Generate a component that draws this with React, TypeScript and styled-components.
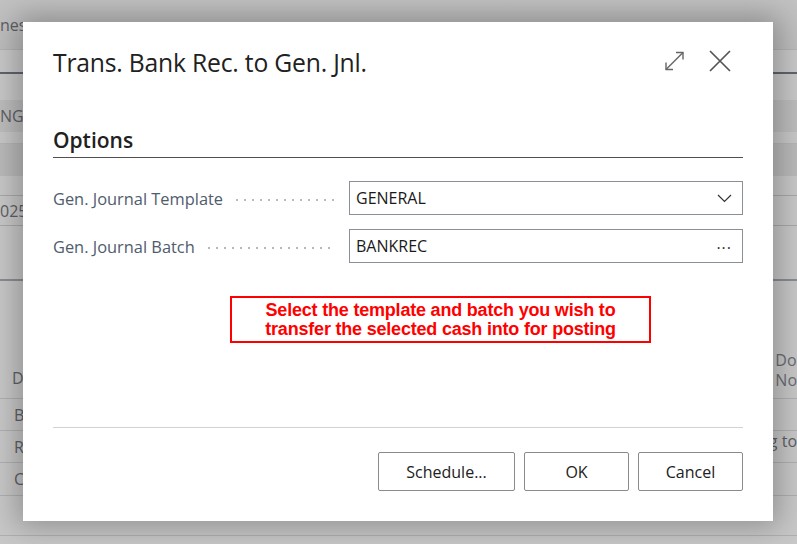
import styled, { createGlobalStyle } from "styled-components";

const GlobalStyle = createGlobalStyle`
  html, body {
    margin: 0;
    padding: 0;
    width: 797px;
    height: 544px;
    overflow: hidden;
    font-family: "Open Sans", "Noto Sans", sans-serif;
  }
`;

const Screen = styled.div`
  position: relative;
  width: 797px;
  height: 544px;
  overflow: hidden;
  background: #c8c8c8;
`;

// the dimmed page behind the dialog
const BgPage = styled.div`
  display: flex;
  flex-direction: column;
  width: 100%;
  height: 100%;
  color: #5e6066;
  font-size: 16px;
`;

const BgRow = styled.div<{ $h: number; $line?: string; $bg?: string; $align?: string }>`
  display: flex;
  align-items: ${(p) => p.$align || "center"};
  justify-content: space-between;
  height: ${(p) => p.$h}px;
  flex-shrink: 0;
  box-sizing: border-box;
  border-bottom: ${(p) => p.$line || "none"};
  background: ${(p) => p.$bg || "transparent"};
`;

const BgText = styled.span<{ $indent?: number; $top?: number; $bottom?: number }>`
  padding-left: ${(p) => p.$indent || 0}px;
  padding-top: ${(p) => p.$top || 0}px;
  padding-bottom: ${(p) => p.$bottom || 0}px;
  white-space: nowrap;
  line-height: 20px;
`;

const BgCell = styled.div`
  display: flex;
  flex-direction: column;
  padding: 0 0 8px 2px;
  line-height: 20px;
  color: #6a6c72;
`;

const Dialog = styled.div`
  position: absolute;
  left: 23px;
  top: 22px;
  width: 750px;
  height: 499px;
  box-sizing: border-box;
  background: #ffffff;
  box-shadow: 0 0 28px 6px rgba(0, 0, 0, 0.28);
  padding: 20px 30px 30px;
  display: flex;
  flex-direction: column;
`;

const Header = styled.div`
  display: flex;
  align-items: center;
  justify-content: space-between;
  height: 40px;
`;

const Title = styled.h1`
  margin: 0;
  font-size: 24.7px;
  font-weight: 400;
  color: #212121;
  letter-spacing: -0.2px;
`;

const HeaderIcons = styled.div`
  display: flex;
  align-items: center;
  gap: 24px;
  margin-right: 12px;
  margin-top: -2px;
`;

const IconBtn = styled.span`
  display: flex;
  align-items: center;
  justify-content: center;
`;

const Section = styled.h2`
  margin: 44px 0 0;
  padding-bottom: 3px;
  font-size: 21px;
  font-weight: 600;
  color: #212121;
  border-bottom: 1px solid #505050;
  line-height: 28px;
`;

const Fields = styled.div`
  display: flex;
  flex-direction: column;
  gap: 14px;
  margin-top: 23px;
`;

const FieldRow = styled.div`
  display: grid;
  grid-template-columns: 282px 1fr;
  column-gap: 14px;
  align-items: center;
`;

const Label = styled.div`
  display: flex;
  align-items: center;
  gap: 10px;
  font-size: 16.4px;
  color: #505c6d;
  white-space: nowrap;
`;

const Leader = styled.span`
  flex: 1;
  height: 2px;
  margin-top: 3px;
  background-image: radial-gradient(circle, #b9b9b9 0.9px, transparent 1.1px);
  background-size: 8px 2px;
  background-repeat: repeat-x;
  background-position: left center;
`;

const InputBox = styled.div`
  display: flex;
  align-items: center;
  justify-content: space-between;
  height: 34px;
  box-sizing: border-box;
  border: 1px solid #8a9099;
  padding: 0 10px 0 6px;
  font-size: 16px;
  color: #1a1a1a;
`;

const Ellipsis = styled.span`
  font-size: 16px;
  letter-spacing: 1px;
  color: #333;
  margin-top: -6px;
`;

const NoteWrap = styled.div`
  display: flex;
  justify-content: center;
  margin-top: 33px;
  padding-left: 85px;
`;

const Note = styled.div`
  width: 421px;
  height: 47px;
  box-sizing: border-box;
  border: 2px solid #ff0000;
  display: flex;
  align-items: center;
  justify-content: center;
  text-align: center;
  color: #ff0000;
  font-family: "Liberation Sans", Arial, sans-serif;
  font-weight: 700;
  font-size: 18px;
  line-height: 19px;
  letter-spacing: -0.2px;
  white-space: nowrap;
`;

const Spacer = styled.div`
  flex: 1;
`;

const Footer = styled.div`
  border-top: 1px solid #d2d2d2;
  display: flex;
  justify-content: flex-end;
  gap: 9px;
  padding-top: 24px;
`;

const Button = styled.button<{ $w: number }>`
  width: ${(p) => p.$w}px;
  height: 39px;
  box-sizing: border-box;
  background: #fff;
  border: 1px solid #8a8a8a;
  border-radius: 2px;
  font-family: "Open Sans", "Noto Sans", sans-serif;
  font-size: 16px;
  color: #212121;
  padding: 0;
`;

export default function App() {
  return (
    <Screen>
      <GlobalStyle />
      <BgPage>
        <BgRow $h={50} $line="1px solid #b3b3b3" $bg="linear-gradient(#c2c2c2, #bdbdbd)">
          <BgText>nes</BgText>
        </BgRow>
        <BgRow $h={24} $line="2px solid #5f646d" />
        <BgRow $h={26} />
        <BgRow $h={32} $bg="#bdbdbd">
          <BgText>NG</BgText>
        </BgRow>
        <BgRow $h={12} $line="1px solid #b6b6b6" />
        <BgRow $h={32} $bg="#bababa" />
        <BgRow $h={20} $line="1px solid #a9a9a9" />
        <BgRow $h={30} $line="1px solid #a9a9a9">
          <BgText>025</BgText>
        </BgRow>
        <BgRow $h={55} $line="2px solid #8a8d93" />
        <BgRow $h={118} $line="1px solid #b0b0b0" $align="flex-end">
          <BgText $indent={12} $bottom={10}>D</BgText>
          <BgCell>
            <span>Do</span>
            <span>No</span>
          </BgCell>
        </BgRow>
        <BgRow $h={32} $line="1px solid #b0b0b0">
          <BgText $indent={14}>B</BgText>
        </BgRow>
        <BgRow $h={32} $line="1px solid #b0b0b0" $align="flex-start">
          <BgText $indent={14} $top={6}>R</BgText>
          <BgText>g to</BgText>
        </BgRow>
        <BgRow $h={33} $line="1px solid #b0b0b0">
          <BgText $indent={14}>C</BgText>
        </BgRow>
        <BgRow $h={40} $line="1px solid #b0b0b0" />
      </BgPage>

      <Dialog>
        <Header>
          <Title>Trans. Bank Rec. to Gen. Jnl.</Title>
          <HeaderIcons>
            <IconBtn>
              <svg width="21" height="20" viewBox="0 0 21 20" fill="none" stroke="#666" strokeWidth="1.4">
                <path d="M2 18.5 L19 1.5" />
                <path d="M12 1.5 H19 V8.5" />
                <path d="M2 11.5 V18.5 H9" />
              </svg>
            </IconBtn>
            <IconBtn>
              <svg width="22" height="22" viewBox="0 0 22 22" fill="none" stroke="#555" strokeWidth="1.7">
                <path d="M1 1 L21 21 M21 1 L1 21" />
              </svg>
            </IconBtn>
          </HeaderIcons>
        </Header>

        <Section>Options</Section>

        <Fields>
          <FieldRow>
            <Label>
              Gen. Journal Template
              <Leader />
            </Label>
            <InputBox>
              GENERAL
              <svg width="15" height="9" viewBox="0 0 15 9" fill="none" stroke="#333" strokeWidth="1.2">
                <path d="M1 1 L7.5 7.5 L14 1" />
              </svg>
            </InputBox>
          </FieldRow>
          <FieldRow>
            <Label>
              Gen. Journal Batch
              <Leader />
            </Label>
            <InputBox>
              BANKREC
              <Ellipsis>...</Ellipsis>
            </InputBox>
          </FieldRow>
        </Fields>

        <NoteWrap>
          <Note>
            Select the template and batch you wish to
            <br />
            transfer the selected cash into for posting
          </Note>
        </NoteWrap>

        <Spacer />

        <Footer>
          <Button $w={137}>Schedule...</Button>
          <Button $w={105}>OK</Button>
          <Button $w={105}>Cancel</Button>
        </Footer>
      </Dialog>
    </Screen>
  );
}
